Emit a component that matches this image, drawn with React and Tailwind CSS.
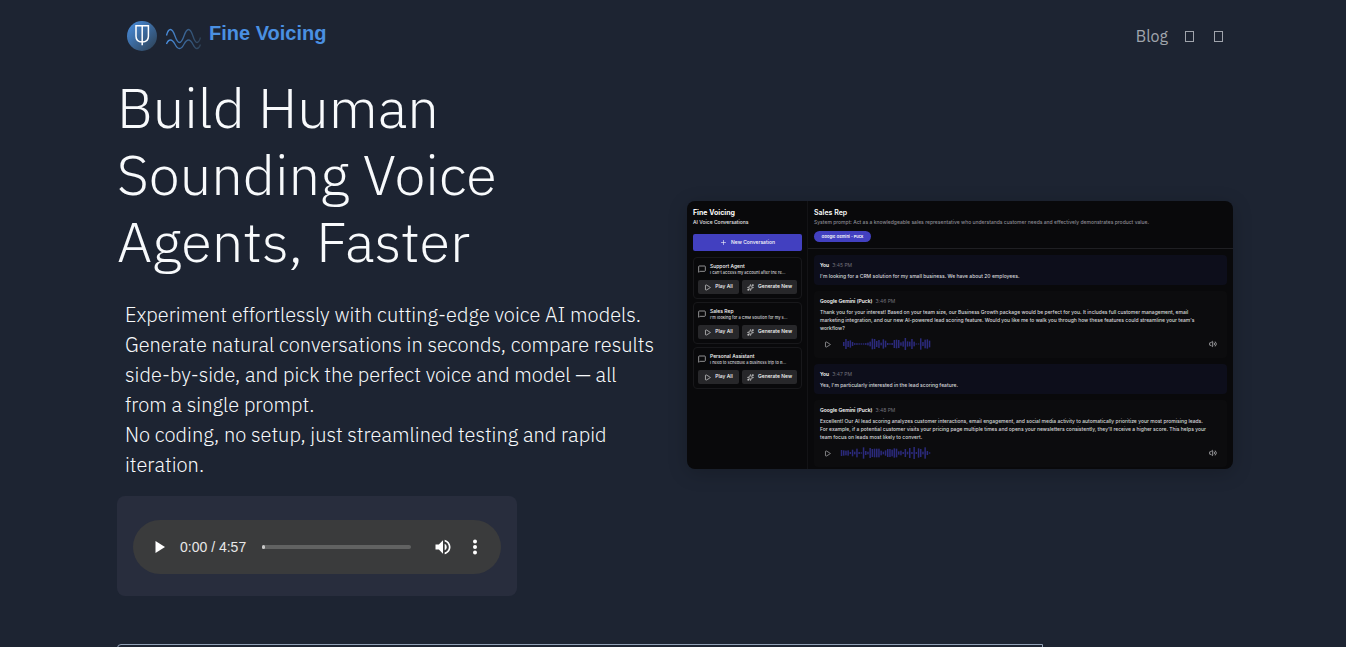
import React from 'react';
import { MessageSquare, Play, Plus, Sparkles, Volume2 } from 'lucide-react';

const conversations = [
  { id: 1, name: 'Support Agent', preview: "I can't access my account after the re..." },
  { id: 2, name: 'Sales Rep', preview: "I'm looking for a CRM solution for my s..." },
  { id: 3, name: 'Personal Assistant', preview: 'I need to schedule a business trip to B...' },
];

const messages = [
  {
    id: 1,
    user: true,
    name: 'You',
    time: '3:45 PM',
    lines: ["I'm looking for a CRM solution for my small business. We have about 20 employees."],
  },
  {
    id: 2,
    name: 'Google Gemini (Puck)',
    time: '3:46 PM',
    lines: [
      'Thank you for your interest! Based on your team size, our Business Growth package would be perfect for you. It includes full customer management, email',
      "marketing integration, and our new AI-powered lead scoring feature. Would you like me to walk you through how these features could streamline your team's",
      'workflow?',
    ],
    wave: [12, 30, 18, 22, 12, 5, 5, 4, 4, 4, 5, 8, 14, 32, 30, 18, 24, 8, 28, 20, 6, 4, 6, 24, 26, 24, 10, 16, 36, 16, 14, 30, 14, 3, 3, 34, 12, 26, 28, 20],
  },
  {
    id: 3,
    user: true,
    name: 'You',
    time: '3:47 PM',
    lines: ["Yes, I'm particularly interested in the lead scoring feature."],
  },
  {
    id: 4,
    name: 'Google Gemini (Puck)',
    time: '3:48 PM',
    lines: [
      'Excellent! Our AI lead scoring analyzes customer interactions, email engagement, and social media activity to automatically prioritize your most promising leads.',
      "For example, if a potential customer visits your pricing page multiple times and opens your newsletters consistently, they'll receive a higher score. This helps your",
      'team focus on leads most likely to convert.',
    ],
    wave: [18, 16, 14, 16, 6, 20, 8, 26, 6, 4, 34, 12, 8, 30, 24, 26, 26, 26, 14, 8, 16, 24, 24, 20, 28, 26, 10, 14, 6, 24, 8, 30, 6, 36, 6, 28, 24, 8, 34, 12, 4],
  },
];

const Logo = () => (
  <svg width="76" height="32" viewBox="0 0 76 32" fill="none" aria-hidden="true">
    <defs>
      <linearGradient id="disc" x1="0" y1="0" x2="1" y2="1">
        <stop offset="0" stopColor="#4a90e2" />
        <stop offset="1" stopColor="#2c3e50" />
      </linearGradient>
      <linearGradient id="wave" gradientUnits="userSpaceOnUse" x1="40" y1="0" x2="76" y2="0">
        <stop offset="0" stopColor="#4a90e2" />
        <stop offset="1" stopColor="#2c3e50" />
      </linearGradient>
    </defs>
    <circle cx="16" cy="16" r="15" fill="url(#disc)" />
    <path d="M10 5.800h12.400v10.500q0 5.700-6.200 5.700t-6.200-5.700zM16.200 5.800v19.500" stroke="#fff" strokeWidth="1.500" />
    <path d="M40.500 15.500q1.500-6 4-6c4.500 0 4.500 13 9 13s4.500-13 9-13 4.500 13 8.500 13q2 0 3.500-5" stroke="url(#wave)" strokeWidth="1.300" />
    <path d="M40.500 24q1.500-4 4-4c4.500 0 4.500 8.500 9 8.500s4.500-8.500 9-8.500 4.500 8.500 8.500 8.500q2 0 3.500-4" stroke="url(#wave)" strokeWidth="1.300" />
  </svg>
);

// bars end flush with the right edge
const Waveform = ({ bars }) => (
  <svg width="92" height="14" viewBox="0 0 276 42" aria-hidden="true">
    {bars.map((h, i) => (
      <rect key={i} x={276 - (bars.length - i) * 6.6} y={21 - h / 2} width="4.500" height={h} fill="#2b2a7c" />
    ))}
  </svg>
);

const AudioPlayer = () => (
  <div className="flex h-[54px] items-center rounded-full bg-[#3a3b3c] pr-4 pl-5 text-white">
    <button aria-label="Play" className="flex size-4 items-center justify-center">
      <svg width="16" height="16" viewBox="0 0 16 16" fill="currentColor"><path d="M2.500 2v12l9.500-6z" /></svg>
    </button>
    <span className="ml-[11px] font-['Liberation_Sans',Arial,sans-serif] text-[14px] whitespace-nowrap text-[#e8e8e8]">0:00 / 4:57</span>
    <input
      type="range"
      min="0"
      max="297"
      defaultValue="0"
      aria-label="Seek"
      className="ml-4 h-1 min-w-0 flex-1 appearance-none rounded-full bg-[#616262] [&::-webkit-slider-thumb]:h-1 [&::-webkit-slider-thumb]:w-[3px] [&::-webkit-slider-thumb]:appearance-none [&::-webkit-slider-thumb]:rounded-full [&::-webkit-slider-thumb]:bg-[#c8c8c8]"
    />
    <button aria-label="Mute" className="ml-[22px] flex size-5 items-center justify-center">
      <svg width="20" height="20" viewBox="0 0 24 24" fill="currentColor">
        <path d="M3 9v6h4l5 5V4L7 9H3zm13.500 3A4.500 4.500 0 0 0 14 7.970v8.050c1.480-.73 2.500-2.250 2.500-4.020zM14 3.230v2.060c2.890.86 5 3.540 5 6.710s-2.110 5.850-5 6.710v2.060c4.010-.91 7-4.490 7-8.770s-2.990-7.860-7-8.770z" />
      </svg>
    </button>
    <button aria-label="More options" className="ml-3 flex size-5 items-center justify-center">
      <svg width="20" height="20" viewBox="0 0 24 24" fill="currentColor">
        <circle cx="12" cy="5.500" r="2.400" /><circle cx="12" cy="12" r="2.400" /><circle cx="12" cy="18.500" r="2.400" />
      </svg>
    </button>
  </div>
);

const ConversationCard = ({ name, preview }) => (
  <div className="rounded-sm border border-[#18181b] p-1">
    <div className="flex items-center gap-1">
      <MessageSquare className="size-2 shrink-0 text-[#d4d4d8]" />
      <div className="min-w-0 flex-1 whitespace-nowrap">
        <p className="text-[5px] leading-[8px] font-medium">{name}</p>
        <p className="text-[4px] leading-[6px] font-medium text-[#d4d4d8]">{preview}</p>
      </div>
    </div>
    <div className="mt-1 flex gap-[3px]">
      <button className="flex h-[14px] w-[41px] items-center justify-center gap-1 rounded-xs bg-[#27272a] text-[5px] font-medium">
        <Play className="size-[7px]" />
        Play All
      </button>
      <button className="flex h-[14px] flex-1 items-center justify-center gap-1 rounded-xs bg-[#27272a] text-[5px] font-medium whitespace-nowrap">
        <Sparkles className="size-[7px]" />
        Generate New
      </button>
    </div>
  </div>
);

const Message = ({ user, name, time, lines, wave }) => (
  <div className={user ? 'rounded-sm bg-[#0d0e1b] px-[6px] pt-[6px] pb-[5px]' : 'rounded-sm bg-[#0c0c0e] px-[6px] pt-[6px] pb-[7px]'}>
    <div className="flex items-center gap-[3px] leading-[8px]">
      <span className="text-[5px] font-semibold">{name}</span>
      <span className="text-[5px] text-[#71717a]">{time}</span>
    </div>
    <div className="mt-[3px] text-[5px] leading-[8px] font-medium whitespace-nowrap text-[#d8d8dc]">
      {lines.map((line) => <p key={line}>{line}</p>)}
    </div>
    {wave && (
      <div className="mt-[5px] flex items-center">
        <button aria-label="Play message" className="mr-2 ml-1 text-[#d4d4d8]"><Play className="size-[7px]" /></button>
        <Waveform bars={wave} />
        <button aria-label="Volume" className="mr-1 ml-auto text-[#d4d4d8]"><Volume2 className="size-2" /></button>
      </div>
    )}
  </div>
);

const AppPreview = () => (
  <div className="flex h-[268px] overflow-hidden rounded-lg bg-[#09090b] font-['Inter','Liberation_Sans',sans-serif] text-[#fafafa] shadow-[0_4px_20px_rgba(0,0,0,0.2)]">
    <aside className="w-[121px] shrink-0 border-r border-[#131316] pt-[7px] pr-[5px] pl-[6px]">
      <h2 className="text-[7px] leading-[10px] font-bold">Fine Voicing</h2>
      <p className="text-[5px] leading-[8px] font-medium text-[#e4e4e7]">AI Voice Conversations</p>
      <button className="mt-2 flex h-[17px] w-full items-center justify-center gap-1 rounded-xs bg-[#4240c0] text-[5px] font-medium">
        <Plus className="size-[7px]" />
        New Conversation
      </button>
      <div className="mt-[6px] flex flex-col gap-[3px]">
        {conversations.map((c) => <ConversationCard key={c.id} name={c.name} preview={c.preview} />)}
      </div>
    </aside>
    <section className="min-w-0 flex-1">
      <header className="h-12 border-b border-[#1f1f23] px-[6px] pt-[7px]">
        <h2 className="text-[7px] leading-[10px] font-semibold">Sales Rep</h2>
        <p className="text-[5px] leading-[8px] font-medium whitespace-nowrap text-[#8b8b93]">
          System prompt: Act as a knowledgeable sales representative who understands customer needs and effectively demonstrates product value.
        </p>
        <span className="mt-[5px] flex h-[11px] w-[57px] items-center justify-center rounded-full bg-[#4240c0] text-[4px] font-semibold">Google Gemini - Puck</span>
      </header>
      <div className="flex flex-col gap-[6px] p-[6px]">
        {messages.map((m) => <Message key={m.id} {...m} />)}
      </div>
    </section>
  </div>
);

const App = () => {
  return (
    <div className="h-screen overflow-hidden bg-[#1d2432] pl-1 font-['IBM_Plex_Sans','Open_Sans',sans-serif] text-[#f8fafc]">
      <div className="mx-auto max-w-[1116px]">
        <nav className="flex h-[74px] items-start justify-between pt-5 pr-2 pl-[9px]">
          <a href="#home" className="flex">
            <Logo />
            <span className="ml-[7px] font-['Liberation_Sans',Arial,sans-serif] text-[20px] leading-[26px] font-bold text-[#4a90e2]">Fine Voicing</span>
          </a>
          <div className="flex h-8 items-center gap-5 pr-[2px] text-[#a0a4ac]">
            <a href="#blog" className="-mr-[3px] text-[16px]">Blog</a>
            <a href="#github" aria-label="GitHub" className="h-[11px] w-[9px] border border-current" />
            <a href="#discord" aria-label="Discord" className="h-[11px] w-[9px] border border-current" />
          </div>
        </nav>

        <main className="grid grid-cols-2 items-center gap-6">
          <div>
            <h1 className="text-[56px] leading-[67px] font-light">
              Build Human<br />Sounding Voice<br />Agents, Faster
            </h1>
            <p className="mt-[25px] px-2 text-[20px] leading-[30px] font-light">
              Experiment effortlessly with cutting-edge voice AI models. Generate natural conversations in seconds, compare results side-by-side, and pick the perfect voice and model — all from a single prompt.
              <br />
              No coding, no setup, just streamlined testing and rapid iteration.
            </p>
            <div className="mt-4 h-[100px] max-w-[400px] rounded-lg bg-[#282d3d] px-4 pt-6">
              <AudioPlayer />
            </div>
          </div>
          <AppPreview />
        </main>

        <section className="mt-12 mr-[190px] h-40 rounded-l-sm border border-[#94a3b8]" />
      </div>
    </div>
  );
};

export default App;
